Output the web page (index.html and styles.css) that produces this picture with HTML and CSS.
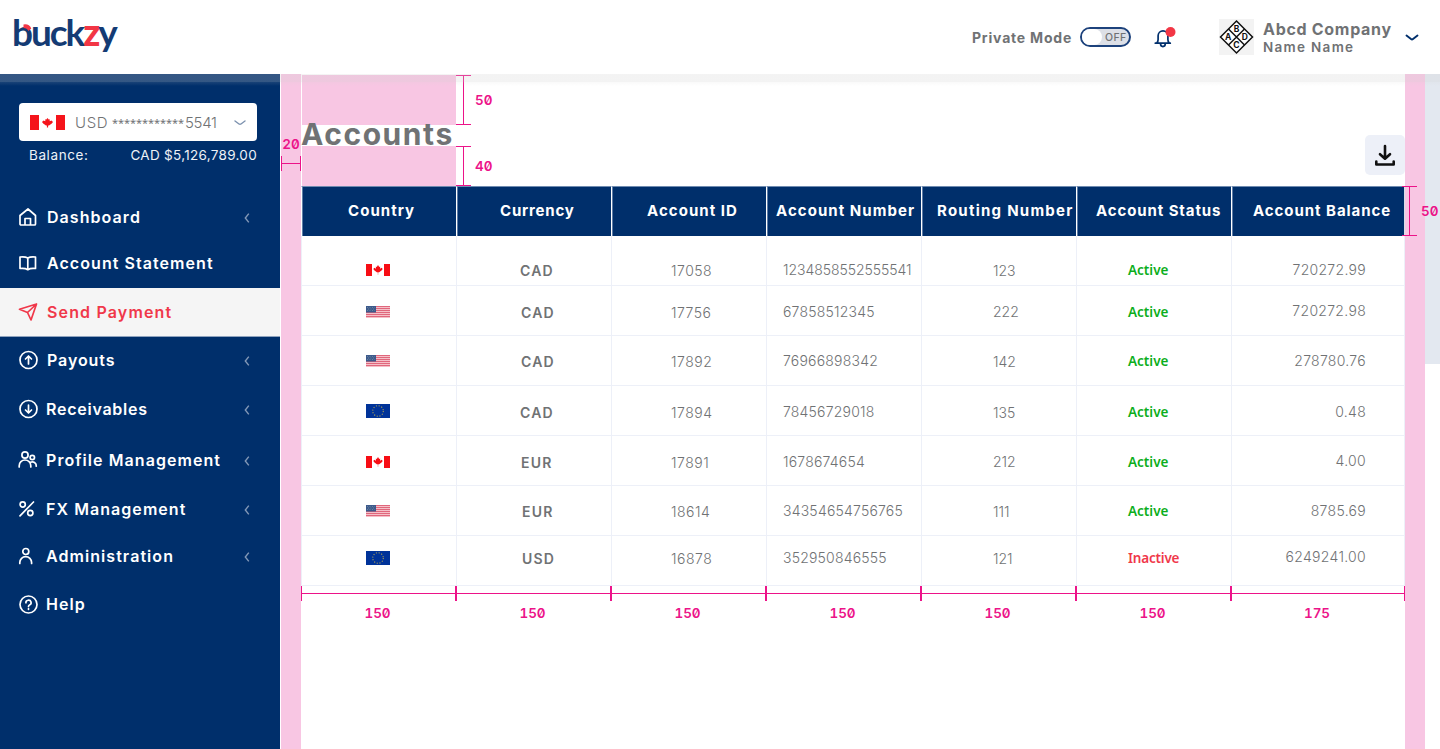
FILE: index.html
```html
<!DOCTYPE html>
<html lang="en">
<head>
<meta charset="utf-8">
<title>Buckzy – Accounts</title>
<link rel="stylesheet" href="styles.css">
</head>
<body>
<svg class="defs" aria-hidden="true">
  <symbol id="flag-ca" viewBox="0 0 24 12"><path fill="#fff" d="M0 0h24v12H0z"/><path fill="#f70d14" d="M0 0h6v12H0zM18 0h6v12h-6zM12 1l1.200 2 1-.5-.2 2.200 1.700-.9 1 1.200-.9 1.300-2.600 1.900-1 .2h-.4l-1-.2-2.600-1.900-.9-1.300 1-1.200 1.700.9-.2-2.200 1 .5z"/><path stroke="#f99" stroke-width=".8" d="M12 8v2.800"/></symbol>
  <symbol id="flag-us" viewBox="0 0 24 12"><path fill="#f5c0c8" d="M0 0h24v12H0z"/><path stroke="#e0677c" stroke-width="1" d="M0 .5h24M0 2.500h24M0 4.500h24M0 6.500h24M0 8.500h24M0 10.500h24"/><path fill="#3c5a8c" d="M0 0h10v6.500H0z"/><path stroke="#7d93a5" stroke-width=".7" stroke-dasharray="1 1.500" d="M1 1.500h8M2 3h7M1 4.500h8"/></symbol>
  <symbol id="flag-eu" viewBox="0 0 24 14"><path fill="#039" d="M0 0h24v14H0z"/><circle cx="12" cy="7" r="5.300" fill="none" stroke="#a99f55" stroke-width="1.100" stroke-dasharray="1.100 1.675"/></symbol>
  <symbol id="chev" viewBox="0 0 6 10"><path d="M4.800.6 1.300 5l3.500 4.400"/></symbol>
</svg>

<header class="topbar">
  <div class="logo">buck<span class="logo-z">z</span>y
    <svg class="logo-accent" width="9" height="8" viewBox="0 0 9 8"><path d="M.5.500Q6-.5 8.300 4.500L5.500 7Q4 4 .5 4z"/></svg>
  </div>
  <div class="private">Private Mode</div>
  <div class="toggle"><span class="knob"></span><span class="toggle-text">OFF</span></div>
  <svg class="bell" width="24" height="24" viewBox="0 0 24 24">
    <path d="M3.300 18.200h15M4.900 17.800q1.200-1.300 1.200-3.300v-3.700a4.900 5 0 0 1 9.800 0v3.700q0 2 1.200 3.300M8.500 18.600a2.400 3 0 0 0 4.800 0"/>
    <circle cx="18.500" cy="7" r="5"/>
  </svg>
  <svg class="emblem" width="35" height="36" viewBox="0 0 35 36">
    <path class="emblem-bg" d="M0 0h35v36H0z"/>
    <path class="emblem-line" d="M17.500 2 33.500 18l-16 16L1.500 18z"/><path class="emblem-line" d="M9.500 10l16 16M25.500 10l-16 16"/>
    <text x="17.500" y="13">B</text><text x="9.300" y="21.300">A</text><text x="25.700" y="21.300">D</text><text x="17.500" y="29.300">C</text>
  </svg>
  <div class="company"><b class="company-name">Abcd Company</b><span class="user-name">Name Name</span></div>
  <svg class="caret" width="14" height="8" viewBox="0 0 14 8"><path d="M1.500 1.500 6 5q1 .8 2 0l4.500-3.500"/></svg>
</header>

<div class="body">
  <aside class="sidebar">
    <div class="select">
      <svg class="select-flag" viewBox="0 0 35 15"><path fill="#f5141b" d="M0 0h9v15H0zM26 0h9v15h-9zM17.500 3l1.200 1.600 1-.4v2l1.800-.6 1.500 1.300-1.200 1.600-2.800 2h-.9v2h-1.200v-2H16l-2.800-2L12 6.900l1.500-1.300 1.800.6v-2l1 .4z"/></svg>
      <span class="select-cur">USD</span><span class="stars">************</span><span class="select-num">5541</span>
      <svg class="select-caret" width="12" height="6" viewBox="0 0 12 6"><path d="M1 1l4 3q1 .6 2 0l4-3"/></svg>
    </div>
    <div class="balance"><span class="balance-key">Balance:</span><span>CAD $5,126,789.00</span></div>
    <nav class="nav">
      <a class="item h46"><svg class="icon" viewBox="0 0 20 20"><path d="M2 8.500 10 2l7.500 6.500V17a1 1 0 0 1-1 1H3a1 1 0 0 1-1-1zM7 18v-6.500h5.500V18"/></svg><span>Dashboard</span><svg class="chev"><use href="#chev"/></svg></a>
      <a class="item h48 statement"><svg class="icon" viewBox="0 0 20 20"><path d="M2 4q5-.6 7.800 1Q12.500 3.400 17.500 4v11.500q-5-.6-7.700 1.200Q7 14.900 2 15.500zM9.800 5v11.500"/></svg><span>Account Statement</span></a>
      <a class="item h48 active"><svg class="icon" viewBox="0 0 20 20"><path d="M1.500 7.200 18.500 2l-5.500 16-3.500-7.500zM18.500 2l-9 8.500"/></svg><span>Send Payment</span></a>
      <a class="item payouts"><svg class="icon" viewBox="0 0 20 20"><circle cx="10.500" cy="10" r="8.500"/><path d="M10.500 14V6.500M7.500 9l3-3 3 3"/></svg><span>Payouts</span><svg class="chev"><use href="#chev"/></svg></a>
      <a class="item h50 near tight"><svg class="icon" viewBox="0 0 20 20"><circle cx="10.500" cy="10" r="8.500"/><path d="M10.500 6v7.500M7.500 11l3 3 3-3"/></svg><span>Receivables</span><svg class="chev"><use href="#chev"/></svg></a>
      <a class="item h52 near"><svg class="icon" viewBox="0 0 20 20"><circle cx="7" cy="5" r="3.100"/><circle cx="14.300" cy="7.500" r="2.200"/><path d="M1.200 17v-1.200a5.600 5.600 0 0 1 11.600 0V17M12.500 12.300a4 4 0 0 1 5.800 3.900"/></svg><span>Profile Management</span><svg class="chev"><use href="#chev"/></svg></a>
      <a class="item h46 near"><svg class="icon" viewBox="0 0 20 20"><circle cx="4.700" cy="5.500" r="2.600"/><circle cx="12.300" cy="14" r="2.600"/><path d="M15.500 3 2 16.800"/></svg><span>FX Management</span><svg class="chev"><use href="#chev"/></svg></a>
      <a class="item h48 near"><svg class="icon" viewBox="0 0 20 20"><circle cx="7.800" cy="5.500" r="3"/><path d="M1.800 17.500v-1a5.900 5.900 0 0 1 11.800 0v1"/></svg><span>Administration</span><svg class="chev"><use href="#chev"/></svg></a>
      <a class="item h48 near"><svg class="icon" viewBox="0 0 20 20"><circle cx="10.500" cy="10.500" r="8.500"/><path d="M7.900 8.800A2.600 2.500 0 1 1 11.500 11q-1 .4-1 1.500M10.500 14.700v.6"/></svg><span>Help</span></a>
    </nav>
  </aside>

  <div class="gutter left">
    <div class="gutter-mark"><span class="dim">20</span><i class="hmark"></i></div>
  </div>

  <main class="main">
    <div class="heading">
      <div class="heading-stack">
        <div class="space s50"><div class="vmark"><span class="dim">50</span></div></div>
        <h1 class="title">Accounts</h1>
        <div class="space s40"><div class="vmark"><span class="dim">40</span></div></div>
      </div>
      <button class="download"><svg width="22" height="22" viewBox="0 0 22 22"><path d="M11 2v12M6 10.200l5 4.500 5-4.500M2.300 17.500v3h17.400v-3"/></svg></button>
    </div>

    <div class="table">
      <div class="row head">
        <div class="th c1">Country</div><div class="th c2">Currency</div><div class="th c3">Account ID</div><div class="th c4">Account Number</div><div class="th c5">Routing Number</div><div class="th c6">Account Status</div><div class="th c7">Account Balance</div>
      </div>
      <div class="row r1"><div class="td flag"><svg class="f12"><use href="#flag-ca"/></svg></div><div class="td cur">CAD</div><div class="td id">17058</div><div class="td num long">1234858552555541</div><div class="td rt low">123</div><div class="td st">Active</div><div class="td bal">720272.99</div></div>
      <div class="row r2"><div class="td flag"><svg class="f12"><use href="#flag-us"/></svg></div><div class="td cur nudge">CAD</div><div class="td id">17756</div><div class="td num">67858512345</div><div class="td rt">222</div><div class="td st">Active</div><div class="td bal high">720272.98</div></div>
      <div class="row r3"><div class="td flag"><svg class="f12"><use href="#flag-us"/></svg></div><div class="td cur nudge">CAD</div><div class="td id">17892</div><div class="td num">76966898342</div><div class="td rt low">142</div><div class="td st">Active</div><div class="td bal">278780.76</div></div>
      <div class="row r4"><div class="td flag up"><svg class="f14"><use href="#flag-eu"/></svg></div><div class="td cur">CAD</div><div class="td id">17894</div><div class="td num">78456729018</div><div class="td rt low">135</div><div class="td st">Active</div><div class="td bal">0.48</div></div>
      <div class="row r5"><div class="td flag"><svg class="f12"><use href="#flag-ca"/></svg></div><div class="td cur nudge">EUR</div><div class="td id">17891</div><div class="td num">1678674654</div><div class="td rt">212</div><div class="td st">Active</div><div class="td bal high">4.00</div></div>
      <div class="row r6"><div class="td flag"><svg class="f12"><use href="#flag-us"/></svg></div><div class="td cur nudge2">EUR</div><div class="td id">18614</div><div class="td num">34354654756765</div><div class="td rt low">111</div><div class="td st">Active</div><div class="td bal">8785.69</div></div>
      <div class="row r7"><div class="td flag"><svg class="f14"><use href="#flag-eu"/></svg></div><div class="td cur nudge2">USD</div><div class="td id">16878</div><div class="td num">352950846555</div><div class="td rt low">121</div><div class="td st inactive">Inactive</div><div class="td bal high">6249241.00</div></div>
      <div class="head-mark"><i class="bar"></i><span class="dim">50</span></div>
    </div>

    <div class="widths">
      <div class="width"><span class="dim">150</span></div><div class="width"><span class="dim">150</span></div><div class="width"><span class="dim">150</span></div><div class="width"><span class="dim">150</span></div><div class="width"><span class="dim">150</span></div><div class="width"><span class="dim">150</span></div><div class="width"><span class="dim">175</span></div>
    </div>
  </main>

  <div class="gutter right"></div>
  <div class="edge"></div>
  <div class="shade"></div>
</div>
</body>
</html>
```

FILE: styles.css
```css
* { box-sizing: border-box; }
body { margin: 0; width: 1440px; height: 749px; overflow: hidden; font-family: Inter, "Noto Sans", sans-serif; background: #fff; color: #707274; }
.defs { position: absolute; width: 0; height: 0; }

/* Top bar */
.topbar { display: flex; align-items: center; height: 74px; background: #fff; }
.logo { position: relative; margin: 0 0 10px 12px; width: 110px; font: 700 37px/44px Lato, sans-serif; letter-spacing: -2.050px; color: #143b74; white-space: nowrap; }
.logo-z { color: #f23645; font-weight: 900; }
.logo-accent { position: absolute; left: 11px; top: 14px; fill: #f23645; }
.private { margin-left: 850px; width: 108px; font-size: 14px; font-weight: 700; letter-spacing: .8px; white-space: nowrap; }
.toggle { display: flex; align-items: center; width: 51px; height: 20px; border: 2px solid #1d427c; border-radius: 10px; background: #dde0e7; }
.knob { width: 20px; height: 16px; border-radius: 8px; background: #fff; }
.toggle-text { margin: 2px 0 0 3px; font-size: 10.500px; line-height: 12px; font-weight: 500; letter-spacing: .4px; }
.bell { margin-left: 21px; fill: none; stroke: #002f6c; stroke-width: 1.700; stroke-linecap: round; stroke-linejoin: round; }
.bell circle { fill: #f23645; stroke: none; }
.emblem { margin-left: 43px; }
.emblem-bg { fill: #f3f3f3; }
.emblem-line { fill: #fff; stroke: #111; stroke-width: 1.500; }
.emblem text { font: 700 8.500px Inter, sans-serif; fill: #111; text-anchor: middle; }
.company { display: flex; flex-direction: column; margin: 2px 0 0 9px; width: 142px; white-space: nowrap; }
.company-name { font-size: 16px; line-height: 18px; font-weight: 700; letter-spacing: .7px; }
.user-name { font-size: 13.500px; line-height: 18px; font-weight: 600; letter-spacing: 1.300px; }
.caret { margin-top: 2px; fill: none; stroke: #002f6c; stroke-width: 1.900; stroke-linecap: round; }

/* Page columns */
.body { position: relative; display: flex; height: 675px; }
.shade { position: absolute; left: 0; top: 0; width: 100%; height: 12px; background: linear-gradient(rgba(208,208,208,.25) 0 8px, rgba(208,208,208,.12) 8px, rgba(208,208,208,0)); }
.sidebar { width: 280px; background: #002f6b; color: #fff; }
.gutter { width: 20px; background: #f8c6e3; }
.gutter.left { margin-left: 1px; }
.edge { width: 15px; height: 290px; background: #e3e8f0; }

/* Account selector */
.select { display: flex; align-items: center; width: 238px; height: 38px; margin: 29px 0 0 19px; padding: 1px 0 0 11px; background: #fff; border-radius: 4px; color: #707274; font-weight: 350; font-size: 15px; }
.select-flag { width: 35px; height: 15px; margin-right: 10px; }
.select-cur { width: 37px; letter-spacing: .6px; }
.stars { width: 73px; font: 400 11px/18px "Noto Sans", sans-serif; letter-spacing: -.05px; white-space: nowrap; }
.select-num { width: 49px; letter-spacing: -.3px; }
.select-caret { fill: none; stroke: #7d92af; stroke-width: 1.400; stroke-linecap: round; }
.balance { display: flex; justify-content: space-between; width: 228px; margin: 4px 0 0 29px; font-size: 13.500px; line-height: 20px; letter-spacing: .3px; color: #eef2f7; }
.balance-key { letter-spacing: .6px; }

/* Navigation */
.nav { margin-top: 29px; }
.item { display: flex; align-items: center; padding: 0 30px 0 18px; font-size: 16px; font-weight: 580; letter-spacing: 1.060px; white-space: nowrap; }
.item span { flex: 1; }
.h46 { height: 46px; } .h48 { height: 48px; } .h50 { height: 50px; } .h52 { height: 52px; }
.statement { padding-bottom: 2px; }
.payouts { height: 47px; margin-top: 1px; padding-bottom: 1px; letter-spacing: .9px; }
.near .icon { margin-right: 8px; }
.tight { letter-spacing: .75px; }
.active { background: #f5f5f5; color: #f0384a; box-shadow: 0 1px 0 #8fa3be; letter-spacing: 1.150px; }
.icon { width: 20px; height: 20px; margin-right: 9px; fill: none; stroke: currentColor; stroke-width: 1.700; stroke-linecap: round; stroke-linejoin: round; }
.chev { width: 6px; height: 10px; margin-top: 2px; fill: none; stroke: #8298b7; stroke-width: 1.400; }

/* Heading */
.main { width: 1104px; }
.heading { display: flex; justify-content: space-between; align-items: flex-end; height: 112px; }
.heading-stack { margin-left: 1px; }
.space { position: relative; width: 154px; background: #f8c6e3; }
.s50 { height: 50px; }
.s40 { height: 40px; }
.title { position: relative; z-index: 1; height: 21px; margin: 0 0 0 -1px; font-size: 30px; line-height: 19px; font-weight: 700; letter-spacing: 1.550px; color: #707274; }
.download { display: grid; place-items: center; width: 40px; height: 40px; margin: 0 0 11px; padding: 0; border: 0; border-radius: 5px; background: #edf0f8; }
.download svg { fill: none; stroke: #111; stroke-width: 2.600; stroke-linejoin: round; stroke-linecap: round; }

/* Measurement marks */
.dim { font-size: 13.500px; line-height: 16px; font-weight: 600; font-feature-settings: "zero", "tnum"; letter-spacing: -.1px; color: #ec1389; }
.vmark { position: absolute; left: 154px; top: 0; display: flex; align-items: center; width: 40px; height: 100%; padding-left: 19px; background: linear-gradient(#ec1389, #ec1389) 7px 0 / 1px 100% no-repeat, linear-gradient(#ec1389, #ec1389) 0 0 / 15px 1px no-repeat, linear-gradient(#ec1389, #ec1389) 0 100% / 15px 1px no-repeat; }
.gutter-mark { display: flex; flex-direction: column; align-items: center; margin-top: 62px; }
.hmark { width: 20px; height: 15px; margin-top: 4px; border: solid #ec1389; border-width: 0 1px; background: linear-gradient(#ec1389, #ec1389) 0 7px / 100% 1px no-repeat; }
.head-mark { position: absolute; left: 1101px; top: 0; display: flex; align-items: center; gap: 4px; height: 50px; z-index: 2; }
.bar { width: 15px; height: 50px; border: solid #ec1389; border-width: 1px 0; background: linear-gradient(#ec1389, #ec1389) 7px 0 / 1px 100% no-repeat; }
.widths { display: grid; grid-template-columns: repeat(6, 155px) 174px; }
.width { display: flex; justify-content: center; height: 36px; padding: 19px 2px 0 0; background: linear-gradient(#ec1389, #ec1389) 0 0 / 1px 15px no-repeat, linear-gradient(#ec1389, #ec1389) 100% 0 / 1px 15px no-repeat, linear-gradient(#ec1389, #ec1389) 0 7px / 100% 1px no-repeat; }

/* Accounts table */
.table { position: relative; }
.row { display: grid; grid-template-columns: repeat(6, 155px) 174px; height: 50px; }
.th { height: 50px; padding-top: 15px; font-size: 15px; line-height: 18px; font-weight: 680; letter-spacing: 1.050px; color: #fff; background: #002f6b; border-left: 1px solid #fff; border-top: 1px solid #6f8bb0; box-shadow: inset 1px 0 0 #5f7da6; white-space: nowrap; }
.c1 { padding-left: 46px; } .c2 { padding-left: 43px; letter-spacing: .8px; } .c3 { padding-left: 35px; } .c4 { padding-left: 9px; }
.c5 { padding-left: 15px; letter-spacing: 1.250px; } .c6 { padding-left: 19px; letter-spacing: .9px; } .c7 { padding-left: 21px; letter-spacing: .95px; border-right: 1px solid #d9dfe9; }
.td { padding-top: var(--drop); border-left: 1px solid #edf0f8; border-bottom: 1px solid #edf0f8; font-size: 14px; line-height: 20px; font-weight: 350; letter-spacing: .3px; white-space: nowrap; }
.r1 { --drop: 24px; } .r2 { --drop: 16px; } .r3 { --drop: 15px; } .r4 { --drop: 16px; } .r5 { --drop: 16px; } .r6 { --drop: 15px; } .r7 { --drop: 12px; }
.flag { display: flex; align-items: flex-start; padding-left: 64px; }
.flag svg { width: 24px; flex: none; }
.f12 { height: 12px; margin-top: 4px; }
.f14 { height: 14px; margin-top: 3px; }
.up { padding-top: calc(var(--drop) - 1px); }
.cur { padding-left: 63px; padding-top: calc(var(--drop) + 1px); font-size: 14px; font-weight: 600; letter-spacing: 1.200px; }
.nudge { padding-left: 64px; } .nudge2 { padding-left: 65px; }
.id { padding-left: 59px; padding-top: calc(var(--drop) + 1px); letter-spacing: .5px; }
.num { padding-left: 16px; letter-spacing: .2px; }
.long { letter-spacing: -.05px; }
.rt { padding-left: 71px; letter-spacing: 0; }
.low { padding-top: calc(var(--drop) + 1px); }
.high { padding-top: calc(var(--drop) - 1px); }
.st { padding-left: 51px; font-family: "Noto Sans", sans-serif; font-weight: 600; font-size: 13.500px; letter-spacing: 0; color: #0cae1c; }
.inactive { color: #f0384a; letter-spacing: -.2px; }
.bal { padding-right: 38px; text-align: right; border-right: 1px solid #edf0f8; }
```
